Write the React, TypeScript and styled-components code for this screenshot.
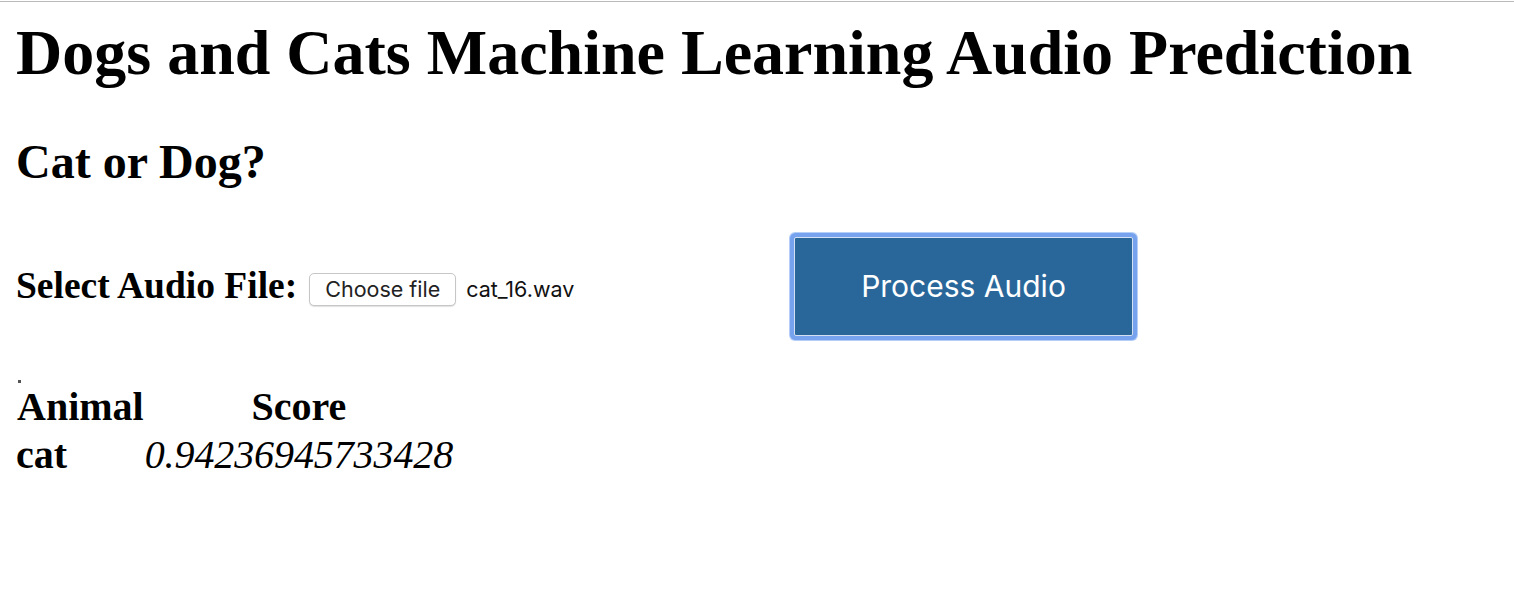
import React from "react";
import styled, { createGlobalStyle } from "styled-components";

const GlobalStyle = createGlobalStyle`
  html, body { margin: 0; padding: 0; background: #ffffff; }
  body { font-family: "Liberation Serif", "Times New Roman", serif; color: #000; }
`;

const Page = styled.div`
  border-top: 1px solid #b9b9b9;
  margin-top: 1px;
  padding: 14px 16px 0 16px;
`;

const Title = styled.h1`
  margin: 0;
  font-size: 64px;
  line-height: 73.6px;
  font-weight: 700;
`;

const Subtitle = styled.h2`
  margin: 44px 0 0 0;
  font-size: 48px;
  line-height: 55.2px;
  font-weight: 700;
`;

const FormRow = styled.form`
  margin-top: 42px;
  display: flex;
  align-items: center;
  height: 111px;
`;

const LeftGroup = styled.div`
  width: 772px;
  display: flex;
  align-items: center;
`;

const Label = styled.label`
  font-size: 37.5px;
  line-height: 42px;
  font-weight: 700;
  margin-right: 12px;
`;

const ChooseButton = styled.span`
  display: inline-flex;
  align-items: center;
  justify-content: center;
  box-sizing: border-box;
  height: 33px;
  padding: 0 15px;
  border: 1px solid #c6c6c6;
  border-radius: 5px;
  background: #ffffff;
  box-shadow: 0 1px 1px rgba(0, 0, 0, 0.12);
  font-family: Inter, "Liberation Sans", sans-serif;
  font-size: 21.5px;
  color: #222;
  margin-top: 6px;
`;

const FileName = styled.span`
  margin-left: 10px;
  margin-top: 6px;
  font-family: Inter, "Liberation Sans", sans-serif;
  font-size: 21.5px;
  color: #111;
`;

const ProcessButton = styled.button`
  box-sizing: border-box;
  width: 339px;
  height: 99px;
  margin-left: 6px;
  border: 1px solid #d3e0f4;
  border-radius: 2px;
  background: #29679a;
  color: #ffffff;
  font-family: Inter, "Liberation Sans", sans-serif;
  font-size: 30px;
  box-shadow: 0 0 0 4px #77a3ee, 0 0 0 5px rgba(150, 185, 245, 0.7);
  outline: none;
`;

const Dot = styled.div`
  width: 3px;
  height: 3px;
  background: #555;
  margin: 38px 0 0 2px;
`;

const ResultTable = styled.table`
  border-collapse: collapse;
  border-spacing: 0;
  font-size: 40px;
  line-height: 46px;
  margin-top: 1px;
`;

const HeadCell = styled.th`
  padding: 0 1px;
  font-weight: 700;
  text-align: center;
`;

const AnimalCell = styled.td`
  padding: 2px 0 0 0;
  font-weight: 700;
`;

const ScoreCell = styled.td`
  padding: 2px 0 0 0;
  font-style: italic;
  letter-spacing: -0.1px;
`;

export default function App() {
  return (
    <>
      <GlobalStyle />
      <Page>
        <Title>Dogs and Cats Machine Learning Audio Prediction</Title>
        <Subtitle>Cat or Dog?</Subtitle>
        <FormRow onSubmit={(e) => e.preventDefault()}>
          <LeftGroup>
            <Label>Select Audio File:</Label>
            <ChooseButton>Choose file</ChooseButton>
            <FileName>cat_16.wav</FileName>
          </LeftGroup>
          <ProcessButton type="submit">Process Audio</ProcessButton>
        </FormRow>
        <Dot />
        <ResultTable>
          <thead>
            <tr>
              <HeadCell>Animal</HeadCell>
              <HeadCell>Score</HeadCell>
            </tr>
          </thead>
          <tbody>
            <tr>
              <AnimalCell>cat</AnimalCell>
              <ScoreCell>0.94236945733428</ScoreCell>
            </tr>
          </tbody>
        </ResultTable>
      </Page>
    </>
  );
}
